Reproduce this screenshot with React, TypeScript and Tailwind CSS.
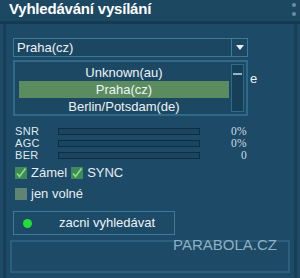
import React from "react";

const font = { fontFamily: '"Liberation Sans", Arial, sans-serif' };

function Check({ on }: { on: boolean }) {
  return (
    <div className={`w-[12px] h-[12px] flex items-center justify-center ${on ? "bg-[#3f8a5c]" : "bg-[#5f8473]"}`}>
      {on && (
        <svg width="12" height="12" viewBox="0 0 12 12">
          <path d="M2 6.5 L4.5 9.5 L10.5 1.5" stroke="#8be476" strokeWidth="1.6" fill="none" />
        </svg>
      )}
    </div>
  );
}

function Bar({ label, value }: { label: string; value: string }) {
  return (
    <div className="flex items-center h-[12px] text-[11px] leading-[12px] text-[#dfe8ee]">
      <span className="w-[45px] pl-[2px] tracking-[0.3px]">{label}</span>
      <div className="w-[142px] h-[7px] border border-[#0f2c40] bg-[#1a4560]" />
      <span className="flex-1 text-right pr-[1px] font-['Liberation_Serif'] text-[11.5px] tracking-[0.3px] text-[#cfdbe4]">{value}</span>
    </div>
  );
}

export default function App() {
  return (
    <div className="w-[300px] h-[278px] bg-[#1d4a66] flex flex-col overflow-hidden relative" style={font}>
      <div className="h-[24px] flex items-center pl-[9px] pb-[2px] bg-[#1c4862] border-b-[3px] border-[#153a52]">
        <span className="text-white font-bold text-[15px] tracking-[-0.2px]">Vyhledávání vysílání</span>
        <div className="ml-auto mr-[4px] flex flex-col gap-[5px]">
          <div className="w-[4px] h-[4px] rounded-full bg-[#6f8c9c]" />
          <div className="w-[4px] h-[4px] rounded-full bg-[#6f8c9c]" />
        </div>
      </div>
      <div className="flex-1 flex flex-col border-l-[3px] border-r-[3px] border-[#183f58] mx-[3px] pl-[4px] pr-[4px] pt-[14px] relative">
        <div className="w-[235px] ml-[3px] flex flex-col">
          {/* dropdown */}
          <div className="h-[19px] border border-[#3e7a98] bg-[#1b4762] flex items-center">
            <span className="flex-1 pl-[3px] text-[13px] text-[#eef3f6]">Praha(cz)</span>
            <div className="w-[16px] h-[17px] border-l border-[#3e7a98] flex items-center justify-center">
              <svg width="8" height="5" viewBox="0 0 8 5">
                <path d="M0 0 L8 0 L4 5 Z" fill="#e8eef2" />
              </svg>
            </div>
          </div>
          {/* popup list */}
          <div className="mt-[3px] h-[56px] border-2 border-[#2f6a88] bg-[#1c4863] flex p-[2px]">
            <div className="flex-1 flex flex-col text-[13px] leading-[17px] text-[#eef3f6] text-center pl-[2px]">
              <div>Unknown(au)</div>
              <div className="bg-[#5b8c60]">Praha(cz)</div>
              <div>Berlin/Potsdam(de)</div>
            </div>
            <div className="w-[13px] ml-[2px] border border-[#2f6a88] bg-[#173f58] pt-[8px]">
              <div className="h-[2px] bg-[#8fb6c8] mx-[1px]" />
            </div>
          </div>
          {/* signal */}
          <div className="mt-[9px] flex flex-col">
            <Bar label="SNR" value="0%" />
            <Bar label="AGC" value="0%" />
            <Bar label="BER" value="0" />
          </div>
          <div className="mt-[5px] flex items-center gap-[4px] text-[13px] text-[#e6edf1] h-[14px] pl-[2px]">
            <Check on />
            <span>Zámel</span>
            <Check on />
            <span>SYNC</span>
          </div>
          <div className="mt-[7px] flex items-center gap-[4px] text-[13px] text-[#e6edf1] h-[14px] pl-[2px]">
            <Check on={false} />
            <span>jen volné</span>
          </div>
          <div className="mt-[10px] w-[162px] h-[24px] border border-[#3e7a98] flex items-center">
            <div className="w-[9px] h-[9px] rounded-full bg-[#22e03a] ml-[9px]" />
            <span className="ml-[27px] text-[13px] text-[#eef3f6]">zacni vyhledávat</span>
          </div>
        </div>
        <div className="mt-[5px] h-[33px] border-2 border-[#2a5f7d]" />
        <span className="absolute left-[244px] top-[45px] text-[13px] text-[#eef3f6]">e</span>
      </div>
      <span className="absolute left-[173px] top-[234px] text-[15px] text-[#8fb0c4]">PARABOLA.CZ</span>
    </div>
  );
}
